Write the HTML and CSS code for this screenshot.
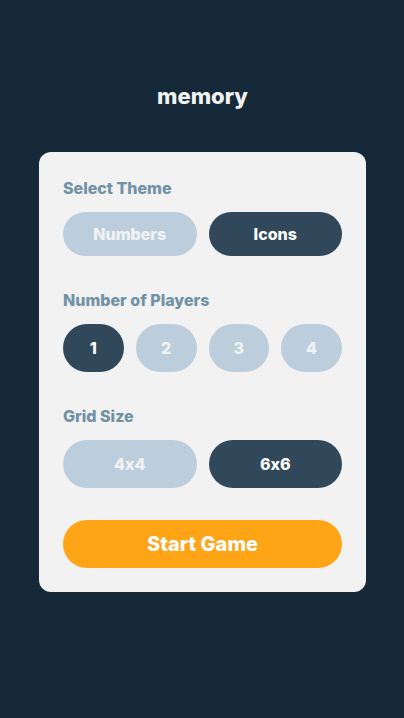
FILE: index.html
```html
<!DOCTYPE html>
<html lang="en">
<head>
<meta charset="utf-8">
<meta name="viewport" content="width=device-width, initial-scale=1">
<title>memory</title>
<link rel="stylesheet" href="styles.css">
</head>
<body>
<main class="page">
  <h1 class="logo">memory</h1>
  <form class="card">
    <section class="group theme" aria-labelledby="theme">
      <h2 class="label" id="theme">Select Theme</h2>
      <div class="options">
        <button type="button" class="option" aria-pressed="false">Numbers</button>
        <button type="button" class="option selected" aria-pressed="true">Icons</button>
      </div>
    </section>
    <section class="group" aria-labelledby="players">
      <h2 class="label" id="players">Number of Players</h2>
      <div class="options">
        <button type="button" class="option selected" aria-pressed="true">1</button>
        <button type="button" class="option" aria-pressed="false">2</button>
        <button type="button" class="option" aria-pressed="false">3</button>
        <button type="button" class="option" aria-pressed="false">4</button>
      </div>
    </section>
    <section class="group" aria-labelledby="grid">
      <h2 class="label" id="grid">Grid Size</h2>
      <div class="options">
        <button type="button" class="option" aria-pressed="false">4x4</button>
        <button type="button" class="option selected" aria-pressed="true">6x6</button>
      </div>
    </section>
    <button type="button" class="start">Start Game</button>
  </form>
</main>
</body>
</html>
```
FILE: styles.css
```css
* {
  box-sizing: border-box;
}

body {
  margin: 0;
  min-height: 100vh;
  background: #152938;
  font-family: Inter, sans-serif;
  font-weight: 800;
  font-variant-ligatures: no-contextual;
}

.page {
  padding: 80px 38px 40px 39px;
}

.logo {
  margin: 0 0 40px;
  color: #f2f2f2;
  font-size: 22px;
  font-weight: 800;
  line-height: 32px;
  text-align: center;
}

.card {
  display: flex;
  flex-direction: column;
  gap: 32px;
  max-width: 654px;
  margin: 0 auto;
  padding: 24px;
  border-radius: 12px;
  background: #f2f2f2;
}

.label {
  margin: 0 0 12px;
  color: #7191a5;
  font-size: 16px;
  font-weight: 800;
  line-height: 24px;
}

.options {
  display: flex;
  gap: 12px;
}

.option,
.start {
  height: 48px;
  padding: 0;
  border: 0;
  border-radius: 24px;
  color: #fcfcfc;
  font: inherit;
  font-variant-ligatures: no-contextual;
  cursor: pointer;
}

.option {
  flex: 1;
  background: #bccedb;
  color: #f2f2f2;
  font-size: 16px;
}

.theme .option {
  height: 44px;
}

.selected {
  background: #304859;
  color: #fcfcfc;
}

.start {
  background: #fea417;
  font-size: 20px;
}
```
